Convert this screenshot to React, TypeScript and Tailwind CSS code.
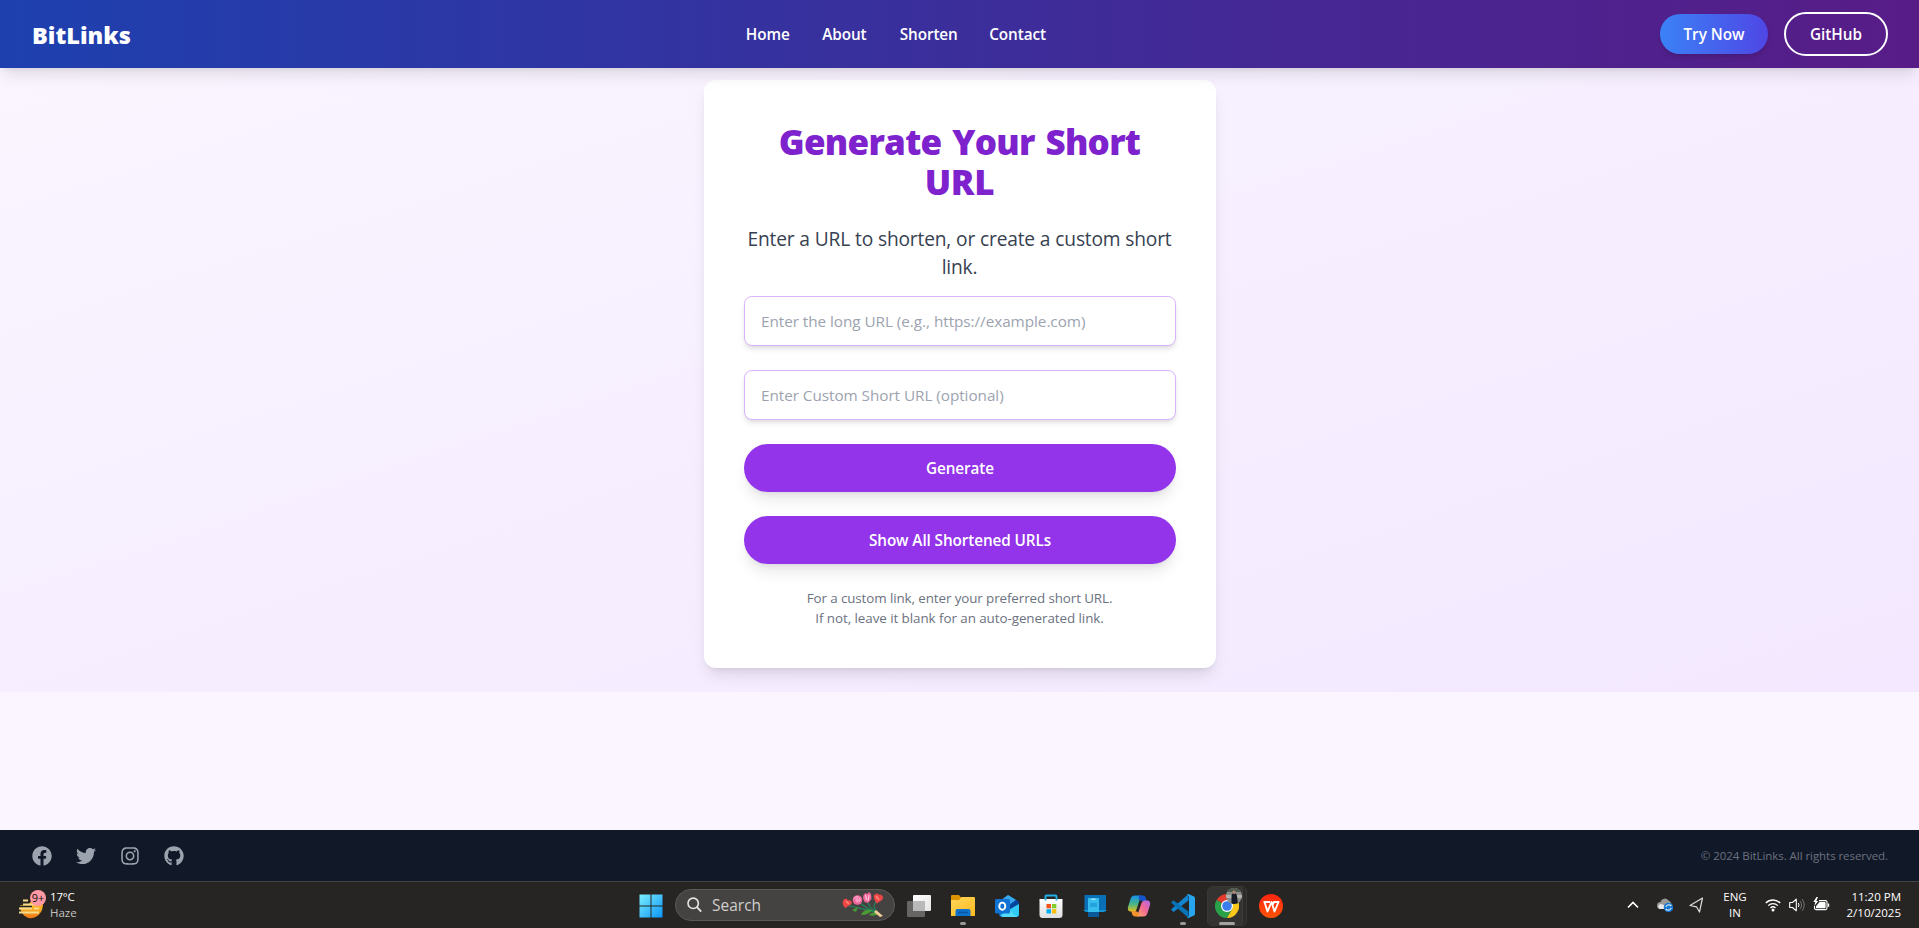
import type { ReactNode } from "react";
import { FaFacebook, FaGithub, FaInstagram, FaTwitter } from "react-icons/fa";

const navLinks = [
  { label: "Home", width: "w-[44.5px]" },
  { label: "About", width: "w-[45.5px]" },
  { label: "Shorten", width: "w-[57.5px]" },
  { label: "Contact", width: "w-[58px]" },
];

function Header() {
  return (
    <header className="relative z-10 flex h-[68px] shrink-0 items-center justify-between bg-[linear-gradient(to_right,#1e40af,#581c87)] pl-8 pr-[31px] text-white shadow-[0_10px_15px_-3px_rgba(0,0,0,0.1),0_4px_6px_-4px_rgba(0,0,0,0.1)]">
      <div className="w-[101px] whitespace-nowrap pt-0.5 text-[23.5px] font-black leading-8">BitLinks</div>
      <nav className="flex gap-8 text-[15.3px] font-semibold leading-6 tracking-[-0.1px]">
        {navLinks.map((l) => (
          <a key={l.label} href="#" className={`whitespace-nowrap ${l.width}`}>
            {l.label}
          </a>
        ))}
      </nav>
      <div className="flex items-center gap-4 text-[15.3px] font-semibold leading-6">
        <button className="h-10 w-[108px] rounded-full bg-[linear-gradient(to_right,#3b82f6,#4f46e5)] shadow-[0_4px_6px_-1px_rgba(0,0,0,0.1),0_2px_4px_-2px_rgba(0,0,0,0.1)]">
          Try Now
        </button>
        <button className="h-11 w-[104px] rounded-full border-2 border-white">GitHub</button>
      </div>
    </header>
  );
}

const inputClass =
  "h-[50px] w-full rounded-lg border border-[#d8b4fe] bg-white pl-[16.5px] pr-4 text-[15.3px] leading-6 tracking-[-0.05px] shadow-[0_4px_6px_-1px_rgba(0,0,0,0.1),0_2px_4px_-2px_rgba(0,0,0,0.1)] outline-none placeholder:text-[#9ca3af]";
const buttonClass =
  "h-12 w-full rounded-full bg-[#9333ea] text-[15.3px] font-semibold leading-6 tracking-[-0.1px] text-white shadow-[0_10px_15px_-3px_rgba(0,0,0,0.1),0_4px_6px_-4px_rgba(0,0,0,0.1)]";

function ShortenCard() {
  return (
    <section className="flex h-[624px] shrink-0 justify-center overflow-hidden bg-[linear-gradient(to_bottom_right,#faf5ff,#f3e8ff)] pt-3">
      <div className="h-[588px] w-[512px] rounded-xl bg-white p-10 text-center shadow-[0_10px_15px_-3px_rgba(0,0,0,0.1),0_4px_6px_-4px_rgba(0,0,0,0.1)]">
        <h1 className="mb-6 translate-y-0.5 text-[35px] font-black leading-10 tracking-[-0.75px] text-[#7e22ce] [word-spacing:2.5px]">
          Generate Your Short
          <br />
          <span className="tracking-[-0.3px]">URL</span>
        </h1>
        <p className="mb-4 translate-y-px whitespace-nowrap text-[19.2px] leading-7 tracking-[-0.2px] text-[#374151] [word-spacing:0.2px]">
          Enter a URL to shorten, or create a custom short
          <br />
          link.
        </p>
        <div className="flex flex-col gap-6">
          <input className={inputClass} placeholder="Enter the long URL (e.g., https://example.com)" />
          <input className={inputClass} placeholder="Enter Custom Short URL (optional)" />
          <button className={`${buttonClass} pl-px`}>Generate</button>
          <button className={`${buttonClass} pl-px`}>Show All Shortened URLs</button>
        </div>
        <div className="mt-6 text-[13.4px] leading-5 tracking-[-0.1px] text-[#6b7280]">
          <p>For a custom link, enter your preferred short URL.</p>
          <p className="tracking-[-0.06px]">If not, leave it blank for an auto-generated link.</p>
        </div>
      </div>
    </section>
  );
}

function Footer() {
  return (
    <footer className="flex h-[51px] shrink-0 items-center justify-between bg-[#111827] pl-8 pr-[31px]">
      <div className="flex gap-6 text-[20px] text-[#9ca3af]">
        <FaFacebook />
        <FaTwitter />
        <FaInstagram />
        <FaGithub />
      </div>
      <p className="pt-px text-[11.5px] leading-4 tracking-[-0.06px] text-[#6b7280]">© 2024 BitLinks. All rights reserved.</p>
    </footer>
  );
}

function Cell({ children, indicator }: { children: ReactNode; indicator?: boolean }) {
  return (
    <div className="relative flex h-[46px] w-11 items-center justify-center pt-px">
      {children}
      {indicator && <span className="absolute bottom-[3px] left-[19px] h-[3px] w-1.5 rounded-full bg-[#9b9997]" />}
    </div>
  );
}

function WeatherIcon() {
  return (
    <svg width="30" height="32" viewBox="0 0 30 32">
      <defs>
        <linearGradient id="sun" x1="0" y1="0" x2="0" y2="1">
          <stop offset="0" stopColor="#fdc62f" />
          <stop offset="1" stopColor="#ee7412" />
        </linearGradient>
      </defs>
      <path d="M2 16h22.500a11.500 11.500 0 0 1-3.500 9.500q-7.500 7-15 1-3-3-4-7z" fill="url(#sun)" />
      <path d="M10 17c1-4 5-6 10-6l5 4-1 4z" fill="#f9ad20" />
      <path d="M1 17.500h13" stroke="#272523" strokeWidth="2" />
      <path d="M5 11.500h5M5 15.500h14M1 19.500h13M16 19.500h5M1 23.500h20" stroke="#f6dc8c" strokeWidth="1.800" />
      <circle cx="20" cy="9" r="8" fill="#ff99a4" />
      <text x="20" y="13" textAnchor="middle" fontSize="11" fill="#101010">
        9+
      </text>
    </svg>
  );
}

function StartIcon() {
  return (
    <svg width="24" height="24" viewBox="0 0 24 24">
      <defs>
        <linearGradient id="win" gradientUnits="userSpaceOnUse" x1="0" y1="0" x2="24" y2="24">
          <stop offset="0" stopColor="#7df0fd" />
          <stop offset="1" stopColor="#0a93f7" />
        </linearGradient>
      </defs>
      <path d="M.5.5h11v11H.5zM12.500.5h11v11h-11zM.5 12.500h11v11H.5zM12.500 12.500h11v11h-11z" fill="url(#win)" />
    </svg>
  );
}

function Flowers() {
  return (
    <svg width="42" height="26" viewBox="0 0 42 26">
      <path d="M5 13c8 3 17 3 30 8M16 9c5 5 10 8 19 12M25 8c1 5 4 9 10 13M35 8c-5 7-3 9 2 14" fill="none" stroke="#20855a" strokeWidth="1.200" />
      <path d="M19 23c2-5 6-6 11-5-3 4-6 5-11 5zM27 23c3-3 6-3 9-1-3 2-6 2-9 1zM10 18l6-3-2 5z" fill="#4a9b35" />
      <path d="M34 18l7 6-3 1-6-5z" fill="#f4ce9a" />
      <path d="M1 9c1-3 4-3 5-.6 3-1 5 2 3 4L3 16C1 13 0 11 1 9zM32 3c2-2 4-2 5 0 3-1 5 2 3.500 4.500L35 11.500c-2-2-4-6-3-8.500z" fill="#ee4548" />
      <path d="M4 9l3 3M34 4l3 4" stroke="#ff8b78" strokeWidth="1.500" />
      <circle cx="15.500" cy="8" r="4.800" fill="#f0669a" />
      <path d="M12 7c1-3 5-3 6 0s-4 4-4 1 3-1 2 1" fill="none" stroke="#ffc3da" />
      <path d="M21.500 3l2-2 1.500 1 2-2 2 2 .5 5-3.500 4-3.500-1-1.500-4z" fill="#ee6599" />
      <path d="M23.500 3l1 5M27 3l-1 6" stroke="#ffc3da" strokeWidth="1.300" />
    </svg>
  );
}

function TaskViewIcon() {
  return (
    <svg width="24" height="24" viewBox="0 0 24 24">
      <defs>
        <linearGradient id="tvw" x1="0" y1="0" x2="1" y2="1">
          <stop offset="0" stopColor="#fff" />
          <stop offset="1" stopColor="#e4e4e4" />
        </linearGradient>
      </defs>
      <rect y="7" width="18" height="16" rx="1" fill="#666564" />
      <rect x="6" y="1" width="18" height="16" rx="1" fill="url(#tvw)" />
      <rect x="6" y="7" width="12" height="10" fill="#b9b9b9" />
    </svg>
  );
}

function FolderIcon() {
  return (
    <svg width="24" height="24" viewBox="0 0 24 24">
      <defs>
        <linearGradient id="folder" x1="0" y1="0" x2="1" y2="1">
          <stop offset="0" stopColor="#ffd75a" />
          <stop offset="1" stopColor="#fbb91f" />
        </linearGradient>
      </defs>
      <path d="M0 2q0-1 1-1h7l2 2.500h13V8H0z" fill="#dc9405" />
      <path d="M0 6h8l2.500-3H23q1 0 1 1v18H0z" fill="url(#folder)" />
      <path d="M4.500 22v-5q0-2 2-2h11q2 0 2 2v5z" fill="#0c72cc" />
      <path d="M7 18.500h10" stroke="#0a58a4" strokeWidth="1.500" />
    </svg>
  );
}

function OutlookIcon() {
  return (
    <svg width="24" height="24" viewBox="0 0 24 24">
      <path d="M4 8l9-7 11 7v12q0 3-3 3H7q-3 0-3-3z" fill="#1267c5" />
      <path d="M5 7l8-6 8 5-9 6z" fill="#38a9ee" />
      <path d="M13 13L21 6l3 2v3l-9 6z" fill="#06439b" />
      <path d="M5 21l19-11v10q0 3-3 3H7z" fill="#31c9f5" />
      <path d="M10 12l12 11H7z" fill="#50dcfa" />
      <rect y="5" width="15" height="14.500" rx="1.500" fill="#1073d4" />
      <ellipse cx="7.300" cy="12.200" rx="3" ry="3.600" fill="none" stroke="#fff" strokeWidth="1.900" />
    </svg>
  );
}

function StoreIcon() {
  return (
    <svg width="24" height="24" viewBox="0 0 24 24">
      <defs>
        <linearGradient id="bag" x1="0" y1="0" x2="0" y2="1">
          <stop offset="0" stopColor="#fff" />
          <stop offset="1" stopColor="#dedede" />
        </linearGradient>
      </defs>
      <path d="M.5 5h23v16q0 3-3 3h-17q-3 0-3-3z" fill="url(#bag)" />
      <path d="M6.500 6.500v-4q0-1 1-1h9q1 0 1 1v4" fill="none" stroke="#22aee6" strokeWidth="1.900" />
      <path d="M7.500 10H12v4.300H7.500z" fill="#f1511b" />
      <path d="M13 10h4.300v4.300H13z" fill="#80cc28" />
      <path d="M7.500 15.200H12v4.300H7.500z" fill="#00adef" />
      <path d="M13 15.200h4.300v4.300H13z" fill="#fbbc09" />
    </svg>
  );
}

function PhoneLinkIcon() {
  return (
    <svg width="24" height="24" viewBox="0 0 24 24">
      <rect x="1.500" y="1" width="21.500" height="16" fill="#096fb6" />
      <path d="M0 16h24l-3 2H3z" fill="#1295d8" />
      <path d="M5 4h11v14H5z" fill="#36bdee" />
      <path d="M5 18h11v5H5z" fill="#0a599a" />
      <path d="M8.500 5.200h4" stroke="#d6f5ff" />
      <path d="M7 11h7" stroke="#23a3dd" strokeWidth="4" />
    </svg>
  );
}

function CopilotIcon() {
  return (
    <svg width="24" height="24" viewBox="0 0 24 24">
      <defs>
        <linearGradient id="cpa" x1="0" y1="0" x2="0" y2="1">
          <stop offset="0" stopColor="#168fe9" />
          <stop offset=".55" stopColor="#47b884" />
          <stop offset="1" stopColor="#e9bd19" />
        </linearGradient>
        <linearGradient id="cpb" x1="1" y1="0" x2="0" y2="1">
          <stop offset="0" stopColor="#ae65ee" />
          <stop offset=".5" stopColor="#f36993" />
          <stop offset="1" stopColor="#ffad63" />
        </linearGradient>
      </defs>
      <path d="M7.500 1.500H14l-4.500 14Q9 17.500 7 17.500H4q-4 0-3-4.500l2.500-8q1-3.500 4-3.500z" fill="url(#cpa)" />
      <path d="M12 1.500h4q2 0 2.700 2L19.800 7H15q-2.500 0-3.500-3z" fill="#1655c9" />
      <path d="M16.500 22.500H10L14.500 9q.8-2.500 3-2.500H20q4 0 3 4.500l-2.500 8q-1 3.500-4 3.500z" fill="url(#cpb)" />
      <path d="M12 22.500H8q-2 0-2.700-2L4.200 17H8q3 0 4 2.500z" fill="#f3932c" />
    </svg>
  );
}

function VsCodeIcon() {
  return (
    <svg width="24" height="24" viewBox="0 0 24 24">
      <path d="M0 15.600L17.500 0v6.600L2.500 18z" fill="#1284cf" />
      <path d="M0 8.400l2.500-2.200L17.500 17.500V24z" fill="#0873b8" />
      <path d="M17.500 0L23 2.600q1 .5 1 1.600v15.600q0 1.100-1 1.600L17.500 24q-1 0-1.500-1 2 .2 2-1.500v-19Q18 .8 16 1q.5-1 1.500-1z" fill="#27a5f1" />
    </svg>
  );
}

function ChromeIcon() {
  return (
    <svg width="24" height="24" viewBox="0 0 24 24">
      <path d="M12 12L1.600 6A12 12 0 0 1 22.400 6z" fill="#e33b2e" />
      <path d="M12 12L1.600 6A12 12 0 0 0 12 24l5.200-9z" fill="#2aa149" />
      <path d="M12 6h10.400A12 12 0 0 1 12 24l5.200-9z" fill="#fcc91b" />
      <circle cx="12" cy="12" r="6" fill="#fff" />
      <circle cx="12" cy="12" r="4.800" fill="#3b7ded" />
    </svg>
  );
}

function ProfileBadge() {
  return (
    <svg width="16" height="16" viewBox="0 0 16 16" className="absolute left-[21px] top-1.5">
      <defs>
        <clipPath id="avatar">
          <circle cx="8" cy="8" r="8" />
        </clipPath>
      </defs>
      <g clipPath="url(#avatar)">
        <path d="M0 0h16v16H0z" fill="#8b8d8a" />
        <path d="M0 0h16v4H0z" fill="#4f5a51" />
        <path d="M0 7h16v3H0z" fill="#b5b3ad" />
        <path d="M5.500 16V8q0-3 2.500-3t3 3l1 8z" fill="#171b27" />
        <circle cx="8" cy="4.300" r="1.700" fill="#b18773" />
      </g>
    </svg>
  );
}

function WpsIcon() {
  return (
    <svg width="24" height="24" viewBox="0 0 24 24">
      <defs>
        <linearGradient id="wps" x1="0" y1="0" x2="0" y2="1">
          <stop offset="0" stopColor="#ff2410" />
          <stop offset="1" stopColor="#ff5405" />
        </linearGradient>
      </defs>
      <circle cx="12" cy="12" r="12" fill="url(#wps)" />
      <path d="M4.500 8h6.500M5.500 8l3 9.500L12.500 8l3 9.500L19.500 8H15l-1.500 3" fill="none" stroke="#fff" strokeWidth="1.900" strokeLinejoin="round" />
    </svg>
  );
}

function Tray() {
  return (
    <div className="ml-auto flex items-center pr-[18px] text-[11.5px] leading-4 text-white">
      <svg width="12" height="8" viewBox="0 0 12 8" className="mr-[18px]">
        <path d="M1 6.500l5-5 5 5" fill="none" stroke="#fff" strokeWidth="1.600" />
      </svg>
      <svg width="16" height="16" viewBox="0 0 16 16" className="mr-4">
        <path d="M3.500 12a3.500 3.500 0 0 1 0-7 4.500 4.500 0 0 1 8-1.500q3 1 3 4.500v4z" fill="#999997" />
        <path d="M2.500 12a2.800 2.800 0 0 1 1-5q3 0 5 2.500l-1 2.500z" fill="#e8e8e8" />
        <circle cx="11.500" cy="10.500" r="4.700" fill="#1678d3" />
        <path d="M8.800 10a2.800 2.800 0 0 1 5-1V7.500M14.200 11a2.800 2.800 0 0 1-5 1v1.500" fill="none" stroke="#fff" />
      </svg>
      <svg width="16" height="17" viewBox="0 0 16 17" className="mr-2.5">
        <path d="M13.500 1L1 8.500l6.500 1.300 3 5.200z" fill="none" stroke="#dcdcdc" strokeWidth="1.200" strokeLinejoin="round" />
      </svg>
      <div className="mr-2.5 w-10 text-center">
        <div>ENG</div>
        <div>IN</div>
      </div>
      <svg width="16" height="14" viewBox="0 0 16 14" className="mr-2">
        <path d="M.8 5a10.200 10.200 0 0 1 14.400 0M3.200 7.600a6.800 6.800 0 0 1 9.600 0M5.500 10a3.600 3.600 0 0 1 5 0" fill="none" stroke="#fff" strokeWidth="1.300" />
        <circle cx="8" cy="12" r="1.500" fill="#fff" />
      </svg>
      <svg width="16" height="16" viewBox="0 0 16 16" className="mr-2" fill="none">
        <path d="M.7 5.500h2.800l3.800-3.300v11.600L3.500 10.500H.7z" stroke="#fff" strokeWidth="1.100" strokeLinejoin="round" />
        <path d="M9.300 6q1.400 2 0 4" stroke="#fff" />
        <path d="M11 4q3.200 4 0 8M13 2q4.500 6 0 12" stroke="#767472" />
      </svg>
      <svg width="17" height="16" viewBox="0 0 17 16">
        <path d="M6 3.600h6.500q1.500 0 1.500 1.500v6q0 1.500-1.500 1.500H3q-1.500 0-1.500-1.500V9" fill="none" stroke="#fff" strokeWidth="1.100" />
        <path d="M6.500 5h5.300q.8 0 .8.800v4.600q0 .8-.8.800H3V9.300zM14.800 6.500h1.400v3.200h-1.400z" fill="#fff" />
        <path d="M3.500 0L.3 5h2L1.300 9l4-5H3.300L5 0z" fill="#fff" />
      </svg>
      <div className="w-[71px] text-right">
        <div>11:20 PM</div>
        <div>2/10/2025</div>
      </div>
    </div>
  );
}

function Taskbar() {
  return (
    <div className="flex h-[47px] shrink-0 items-center border-t border-[#454443] bg-[#272523]">
      <div className="flex w-[629px] items-center pl-[18px] text-[11.5px] leading-4">
        <WeatherIcon />
        <div className="pl-0.5">
          <div className="tracking-[-0.2px] text-white">17°C</div>
          <div className="text-[#c4c3c2]">Haze</div>
        </div>
      </div>
      <Cell>
        <StartIcon />
      </Cell>
      <div className="mx-0.5 flex h-8 w-[220px] items-center rounded-full border border-[#5b5957] bg-[#454341] pl-[11px] pr-2.5">
        <svg width="15" height="16" viewBox="0 0 15 16">
          <circle cx="6.200" cy="6.300" r="5.200" fill="none" stroke="#e6e6e6" strokeWidth="1.600" />
          <path d="M10 10.200l4.200 4.500" stroke="#e6e6e6" strokeWidth="1.800" />
        </svg>
        <span className="ml-2.5 flex-1 text-[15.5px] leading-6 text-[#cfcecd]">Search</span>
        <Flowers />
      </div>
      <Cell>
        <TaskViewIcon />
      </Cell>
      <Cell indicator>
        <FolderIcon />
      </Cell>
      <Cell>
        <OutlookIcon />
      </Cell>
      <Cell>
        <StoreIcon />
      </Cell>
      <Cell>
        <PhoneLinkIcon />
      </Cell>
      <Cell>
        <CopilotIcon />
      </Cell>
      <Cell indicator>
        <VsCodeIcon />
      </Cell>
      <div className="relative flex h-[46px] w-11 items-center pl-0.5 pt-px">
        <div className="flex h-10 w-10 rounded-[5px] border border-[#3a3836] bg-[#2d2b29]">
          <div className="flex h-[38px] w-[35px] items-center rounded-[4px] border-r border-[#403e3c] bg-[#353331] pl-[7px]">
            <ChromeIcon />
          </div>
        </div>
        <ProfileBadge />
        <span className="absolute bottom-[3px] left-3.5 h-[3px] w-4 rounded-full bg-[#a3a2a1]" />
      </div>
      <Cell>
        <WpsIcon />
      </Cell>
      <Tray />
    </div>
  );
}

export default function App() {
  return (
    <div className="flex h-[928px] w-full flex-col overflow-hidden bg-[#faf5ff] font-['Open_Sans','Noto_Sans',sans-serif]">
      <Header />
      <ShortenCard />
      <div className="flex-1" />
      <Footer />
      <Taskbar />
    </div>
  );
}
